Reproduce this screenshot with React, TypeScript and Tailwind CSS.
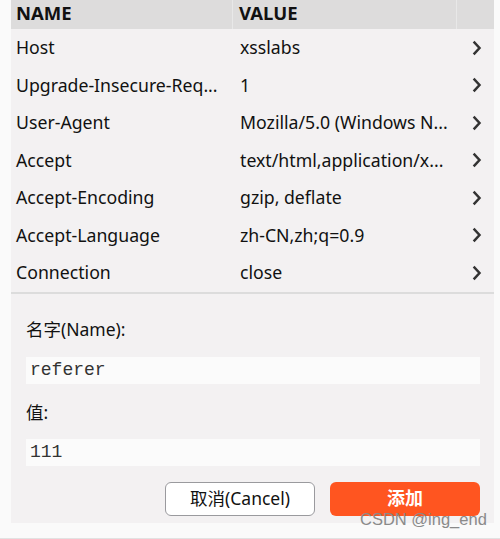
import React from "react";

const headers: [string, string][] = [
  ["Host", "xsslabs"],
  ["Upgrade-Insecure-Req...", "1"],
  ["User-Agent", "Mozilla/5.0 (Windows N..."],
  ["Accept", "text/html,application/x..."],
  ["Accept-Encoding", "gzip, deflate"],
  ["Accept-Language", "zh-CN,zh;q=0.9"],
  ["Connection", "close"],
];

const Chevron = () => (
  <svg width="10" height="16" viewBox="0 0 10 16" className="text-[#333]">
    <path
      d="M2.5 2.5 L7.5 8 L2.5 13.5"
      fill="none"
      stroke="currentColor"
      strokeWidth="2.5"
      strokeLinecap="square"
    />
  </svg>
);

const font = {
  fontFamily: '"Noto Sans", "Noto Sans CJK SC", sans-serif',
};

const mono = { fontFamily: '"Liberation Mono", monospace' };

const App = () => {
  return (
    <div
      className="relative w-[500px] h-[539px] bg-[#fafafa] text-[#111] border-b border-[#e2e2e2] overflow-hidden"
      style={font}
    >
      <div className="ml-[11px] w-[483px] h-[523px] bg-[#f3f1f2] flex flex-col">
        {/* table header */}
        <div className="flex h-[29px] bg-[#dddcdc] font-bold text-[18.5px] leading-[26px]">
          <div className="w-[222px] pl-[5px] border-r border-[#e8e8e8]">NAME</div>
          <div className="w-[224px] pl-[6px] border-r border-[#e8e8e8]">VALUE</div>
          <div className="flex-1"></div>
        </div>

        {/* rows */}
        <div className="flex flex-col border-b-2 border-[#dcdcdc]">
          {headers.map(([name, value]) => (
            <div key={name} className="flex items-center h-[37.5px] text-[17.7px]">
              <div className="w-[222px] pl-[5px] whitespace-nowrap">{name}</div>
              <div className="w-[224px] pl-[7px] whitespace-nowrap">{value}</div>
              <div className="flex-1 flex justify-end pr-[12px]">
                <Chevron />
              </div>
            </div>
          ))}
        </div>

        {/* form */}
        <div className="flex flex-col px-[15px] pt-[23px]">
          <div className="text-[17.5px] leading-[24px]">名字(Name):</div>
          <div
            className="mt-[16px] h-[27px] w-[454px] bg-[#fbfbfb] pl-[4px] text-[18px] leading-[27px] text-[#333]"
            style={mono}
          >
            referer
          </div>
          <div className="mt-[16px] text-[17.5px] leading-[24px]">值:</div>
          <div
            className="mt-[15px] h-[27px] w-[454px] bg-[#fbfbfb] pl-[4px] text-[18px] leading-[27px] text-[#333]"
            style={mono}
          >
            111
          </div>
          <div className="mt-[16px] flex justify-end gap-[15px] w-[454px]">
            <button className="w-[150px] h-[34px] rounded-[6px] border border-[#9a9a9e] bg-white text-[17.5px] text-[#111]">
              取消(Cancel)
            </button>
            <button className="w-[150px] h-[34px] rounded-[6px] bg-[#ff5520] text-white text-[18px] font-bold">
              添加
            </button>
          </div>
        </div>
      </div>

      <div
        className="absolute left-[360px] top-[509px] text-[16.5px] text-[#8a8a8a] leading-[20px]"
        style={{ fontFamily: '"Liberation Sans", sans-serif' }}
      >
        CSDN @ing_end
      </div>
    </div>
  );
};

export default App;
